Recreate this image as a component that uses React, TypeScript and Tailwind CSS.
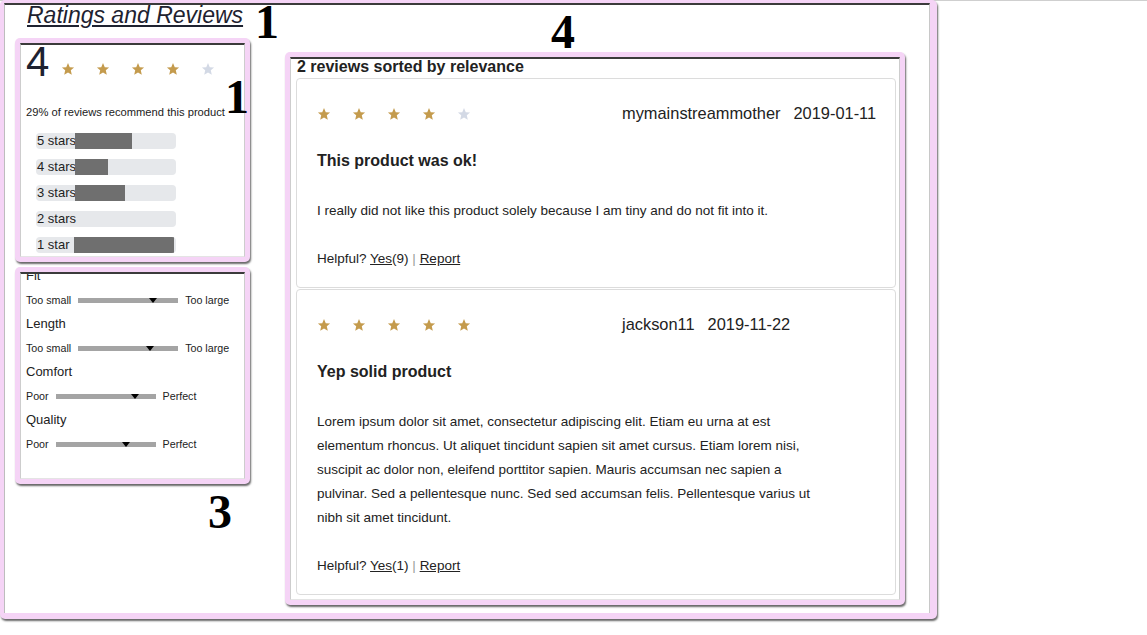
import React from 'react';

const GOLD = '#c49b4d';
const GREY_STAR = '#d3d9e5';

const Star = ({ filled, size = 14 }: { filled: boolean; size?: number }) => (
  <svg width={size} height={size} viewBox="0 0 24 24" className="block shrink-0">
    <path
      d="M12 1.8l3 7 7.4.6-5.6 4.9 1.7 7.4L12 17.8l-6.5 3.9 1.7-7.4L1.6 9.4 9 8.8z"
      fill={filled ? GOLD : GREY_STAR}
    />
  </svg>
);

const Stars = ({ count, gap, size }: { count: number; gap: string; size?: number }) => (
  <div className={`flex ${gap}`}>
    {[1, 2, 3, 4, 5].map((n) => (
      <Star key={n} filled={n <= count} size={size} />
    ))}
  </div>
);

const Panel = ({
  className,
  innerClassName,
  children,
}: {
  className: string;
  innerClassName?: string;
  children: React.ReactNode;
}) => (
  <div className={`rounded-[5px] bg-[#f5d4f6] p-[5px] shadow-[1px_2px_2px_rgba(0,0,0,0.6)] ${className}`}>
    <div
      className={`h-full overflow-hidden bg-white border-t-2 border-t-[#3b3b3b] border-x border-x-[#cdcdcd] border-b border-b-[#e4e4e4] ${innerClassName ?? ''}`}
    >
      {children}
    </div>
  </div>
);

const breakdown = [
  { label: '5 stars', offset: 'w-[39px]', fill: 57 },
  { label: '4 stars', offset: 'w-[39px]', fill: 33 },
  { label: '3 stars', offset: 'w-[39px]', fill: 50 },
  { label: '2 stars', offset: 'w-[39px]', fill: 0 },
  { label: '1 star', offset: 'w-[38px]', fill: 100 },
];

const traits = [
  { name: 'Fit', low: 'Too small', high: 'Too large', at: 75 },
  { name: 'Length', low: 'Too small', high: 'Too large', at: 72 },
  { name: 'Comfort', low: 'Poor', high: 'Perfect', at: 79 },
  { name: 'Quality', low: 'Poor', high: 'Perfect', at: 70.5 },
];

const reviews = [
  {
    rating: 4,
    user: 'mymainstreammother',
    date: '2019-01-11',
    title: 'This product was ok!',
    body: ['I really did not like this product solely because I am tiny and do not fit into it.'],
    helpful: 9,
  },
  {
    rating: 5,
    user: 'jackson11',
    date: '2019-11-22',
    title: 'Yep solid product',
    body: [
      'Lorem ipsum dolor sit amet, consectetur adipiscing elit. Etiam eu urna at est',
      'elementum rhoncus. Ut aliquet tincidunt sapien sit amet cursus. Etiam lorem nisi,',
      'suscipit ac dolor non, eleifend porttitor sapien. Mauris accumsan nec sapien a',
      'pulvinar. Sed a pellentesque nunc. Sed sed accumsan felis. Pellentesque varius ut',
      'nibh sit amet tincidunt.',
    ],
    helpful: 1,
  },
];

const Marker = ({ children, className }: { children: React.ReactNode; className: string }) => (
  <span
    className={`absolute text-[48px] leading-none font-bold text-black font-['Liberation_Serif',serif] ${className}`}
  >
    {children}
  </span>
);

export default function App() {
  return (
    <div className="relative min-h-[635px] border-t border-t-[#cfcfcf] bg-white font-['Liberation_Sans',Arial,sans-serif] text-[#222]">
      <div className="-mt-px w-[937px] h-[619px] rounded-[5px] bg-[#f5d4f6] pt-[3px] pl-[4px] pr-[7px] pb-[6px] shadow-[1px_2px_2px_rgba(0,0,0,0.6)]">
        <div className="h-full bg-white border-t-2 border-t-[#3b3b3b] border-l border-l-[#bdbdbd] border-r border-r-[#c8c8c8]">
          <h1 className="pl-[22px] text-[23px] leading-[20px] italic underline underline-offset-[2px] decoration-[1.5px] text-[#1e2230]">
            Ratings and Reviews
          </h1>

          <div className="flex mt-[13px] ml-[10px]">
            {/* left column */}
            <div className="w-[235px] flex flex-col gap-[5px]">
              <Panel className="h-[224px]" innerClassName="pl-[5px]">
                <div className="flex items-start -mt-[4px]">
                  <span className="text-[42px] leading-[42px] text-[#1e2230]">4</span>
                  <div className="ml-[12px] mt-[21px]">
                    <Stars count={4} gap="gap-[21px]" size={14} />
                  </div>
                </div>
                <p className="mt-[23px] text-[11.2px] leading-[13px]">29% of reviews recommend this product</p>
                <div className="mt-[14px] ml-[10px] flex flex-col gap-[10px]">
                  {breakdown.map((b) => (
                    <div key={b.label} className="flex w-[140px] h-[16px] items-center overflow-hidden rounded-[4px] bg-[#e6e8eb]">
                      <span className={`${b.offset} shrink-0 whitespace-nowrap pl-[1px] text-[13px] leading-[16px]`}>{b.label}</span>
                      <div className="h-full bg-[#6f6f6f]" style={{ width: b.fill }} />
                    </div>
                  ))}
                </div>
              </Panel>

              <Panel className="h-[217px]" innerClassName="pl-[5px]">
                <div className="-mt-[10px]">
                  {traits.map((t) => (
                    <div key={t.name}>
                      <div className="text-[13px] leading-[24px]">{t.name}</div>
                      <div className="flex items-center gap-[7px] h-[24px] text-[10.7px]">
                        <span>{t.low}</span>
                        <div className="relative w-[100px] h-[5px] bg-[#a4a4a4]">
                          <span
                            className="absolute top-0 -translate-x-1/2 border-x-[4px] border-x-transparent border-t-[5px] border-t-black"
                            style={{ left: `${t.at}%` }}
                          />
                        </div>
                        <span>{t.high}</span>
                      </div>
                    </div>
                  ))}
                </div>
              </Panel>
            </div>

            {/* reviews */}
            <Panel className="ml-[35px] mt-[14px] w-[620px] h-[553px]">
              <h2 className="pl-[6px] text-[16px] leading-[16px] font-bold">2 reviews sorted by relevance</h2>
              <div className="ml-[5px] mt-[3px] flex w-[600px] flex-col gap-[1px]">
                {reviews.map((r) => (
                  <div key={r.user} className="rounded-[4px] border border-[#dcdcdc] pt-[22px] pb-[16px] pl-[20px]">
                    <div className="grid grid-cols-[305px_1fr]">
                      <div className="mt-[6px]">
                        <Stars count={r.rating} gap="gap-[21px]" />
                      </div>
                      <div className="flex gap-[13px] text-[16.4px] leading-[24px]">
                        <span>{r.user}</span>
                        <span>{r.date}</span>
                      </div>
                    </div>
                    <h3 className="mt-[24px] text-[16px] leading-[24px] font-bold">{r.title}</h3>
                    <p className="mt-[26px] text-[13.5px] leading-[24px]">
                      {r.body.map((line, i) => (
                        <React.Fragment key={i}>
                          {line}
                          {i < r.body.length - 1 && <br />}
                        </React.Fragment>
                      ))}
                    </p>
                    <div className="mt-[24px] text-[13.5px] leading-[24px]">
                      Helpful? <span className="underline">Yes</span>({r.helpful}) <span className="text-[#9a9a9a]">|</span>{' '}
                      <span className="underline">Report</span>
                    </div>
                  </div>
                ))}
              </div>
            </Panel>
          </div>
        </div>
      </div>

      <Marker className="left-[255px] top-[-3px]">1</Marker>
      <Marker className="left-[225px] top-[72px]">1</Marker>
      <Marker className="left-[551px] top-[7px]">4</Marker>
      <Marker className="left-[208px] top-[487px]">3</Marker>
    </div>
  );
}
